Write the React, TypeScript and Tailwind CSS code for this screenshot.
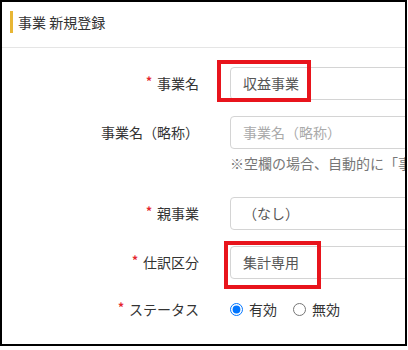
const FONT = { fontFamily: '"Noto Sans CJK JP", "Noto Sans", sans-serif' };

function Req() {
  return <span className="mr-[5px] mt-[-5px] text-[12px] font-bold leading-none text-[#e5262e]">*</span>;
}

function Row({ label, required, children }: { label: string; required?: boolean; children: React.ReactNode }) {
  return (
    <div className="flex items-center">
      <div className="flex w-[197px] shrink-0 items-center justify-end text-[14px] text-[#333]">
        {required && <Req />}
        <span>{label}</span>
      </div>
      <div className="ml-[31px] shrink-0">{children}</div>
    </div>
  );
}

function Box({ text, placeholder }: { text?: string; placeholder?: string }) {
  return (
    <div className="flex h-[33px] w-[300px] items-center rounded-[4px] border border-[#d4d4d4] bg-white pl-[12px] text-[14px]">
      {text ? <span className="text-[#555]">{text}</span> : <span className="text-[#aaa]">{placeholder}</span>}
    </div>
  );
}

export default function App() {
  return (
    <div style={FONT} className="relative h-[346px] w-[407px] overflow-hidden border-2 border-black bg-white">
      <div className="flex h-[46px] items-start border-b border-[#e5e5e5] pl-[8px] pt-[9px]">
        <div className="h-[22px] w-[3px] bg-[#e8b634]" />
        <div className="ml-[5px] text-[14px] leading-[22px] text-[#333]">事業 新規登録</div>
      </div>
      <div className="pt-[19px]">
        <Row label="事業名" required>
          <Box text="収益事業" />
        </Row>
        <div className="mt-[16px]">
          <Row label="事業名（略称）">
            <Box placeholder="事業名（略称）" />
          </Row>
          <div className="ml-[228px] mt-[4px] whitespace-nowrap text-[14px] leading-[20px] text-[#777]">
            ※空欄の場合、自動的に「事業名」が設定されます
          </div>
        </div>
        <div className="mt-[24px]">
          <Row label="親事業" required>
            <Box text="（なし）" />
          </Row>
        </div>
        <div className="mt-[16px]">
          <Row label="仕訳区分" required>
            <Box text="集計専用" />
          </Row>
        </div>
        <div className="mt-[20px]">
          <Row label="ステータス" required>
            <div className="flex h-[20px] items-center text-[14px] text-[#333]">
              <input type="radio" name="status" defaultChecked className="m-0 h-[13px] w-[13px]" />
              <span className="ml-[6px]">有効</span>
              <input type="radio" name="status" className="m-0 ml-[16px] h-[13px] w-[13px]" />
              <span className="ml-[6px]">無効</span>
            </div>
          </Row>
        </div>
      </div>
      <div className="absolute left-[215px] top-[58px] h-[42px] w-[94px] border-[4px] border-[#e8141c]" />
      <div className="absolute left-[222px] top-[239px] h-[48px] w-[97px] border-[4px] border-[#e8141c]" />
    </div>
  );
}
